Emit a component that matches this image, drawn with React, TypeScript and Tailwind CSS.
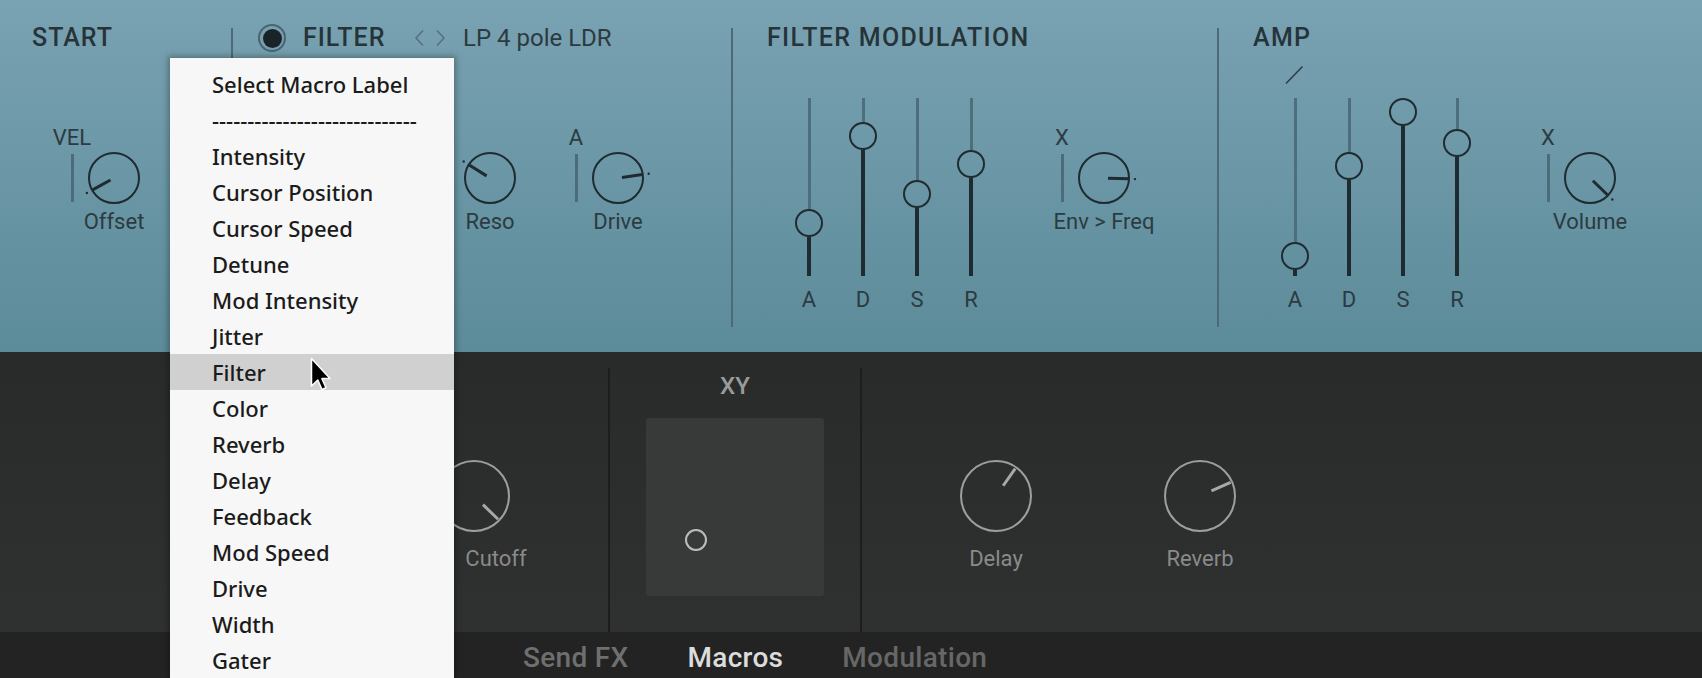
import React from "react";

function pt(cx: number, cy: number, d: number, a: number): [number, number] {
  const r = (a * Math.PI) / 180;
  return [cx + d * Math.cos(r), cy + d * Math.sin(r)];
}

function TealKnob({ angle }: { angle: number }) {
  const [x1, y1] = pt(26, 26, 4, angle);
  const [x2, y2] = pt(26, 26, 24.5, angle);
  const [dx, dy] = pt(26, 26, 31, angle);
  return (
    <svg width={52} height={52} viewBox="0 0 52 52" className="overflow-visible mt-[31px] shrink-0">
      <circle cx={26} cy={26} r={25} fill="none" stroke="#1f2b30" strokeWidth={2} />
      <line x1={x1} y1={y1} x2={x2} y2={y2} stroke="#1f2b30" strokeWidth={3} />
      <circle cx={dx} cy={dy} r={1.2} fill="#1f2b30" />
    </svg>
  );
}

function DarkKnobSvg({ angle }: { angle: number }) {
  const [x1, y1] = pt(36, 36, 12.5, angle);
  const [x2, y2] = pt(36, 36, 33.5, angle);
  return (
    <svg width={72} height={72} viewBox="0 0 72 72" className="shrink-0">
      <circle cx={36} cy={36} r={35} fill="none" stroke="#9e9e9e" strokeWidth={2} />
      <line x1={x1} y1={y1} x2={x2} y2={y2} stroke="#a8a8a8" strokeWidth={3} />
    </svg>
  );
}

function ModKnob({ label, name, angle }: { label: string; name: string; angle: number }) {
  return (
    <div className="flex gap-[4px]">
      <div className="w-[24px] flex flex-col items-center">
        <div className="pt-[2px] h-[30px] leading-[30px] text-[22px] whitespace-nowrap text-[#2b3b41]">{label}</div>
        <div className="mt-[3px] w-[3px] h-[48px] bg-[#4b6c78]" />
      </div>
      <div className="w-[52px] flex flex-col items-center">
        <TealKnob angle={angle} />
        <div className="mt-[3px] h-[30px] leading-[30px] text-[22px] whitespace-nowrap text-[#2b3b41]">{name}</div>
      </div>
    </div>
  );
}

function Slider({ label, handle, slash }: { label: string; handle: number; slash?: boolean }) {
  const upper = handle - 14 - 98;
  const lower = 276 - (handle + 14);
  return (
    <div className="w-[30px] flex flex-col items-center">
      <div className="h-[40px] w-full flex justify-center">
        {slash && (
          <svg width={20} height={20} viewBox="0 0 20 20" className="mt-[7px]">
            <line x1={1} y1={18.5} x2={17.5} y2={1.5} stroke="#2b3b41" strokeWidth={1.5} />
          </svg>
        )}
      </div>
      <div className="w-[3px] bg-[#4d6f7b]" style={{ height: upper }} />
      <div className="w-[28px] h-[28px] rounded-full border-2 border-[#1f2b30] shrink-0" />
      <div className="w-[4px] bg-[#1f2b30]" style={{ height: lower }} />
      <div className="mt-[9px] h-[30px] leading-[30px] text-[22px] text-[#2b3b41]">{label}</div>
    </div>
  );
}

function TopDivider() {
  return <div className="w-[2px] h-[299px] mt-[28px] bg-[#4c6b76] shrink-0" />;
}

function DarkDivider() {
  return <div className="w-[2px] h-[264px] mt-[16px] bg-[#1d1d1d] shrink-0" />;
}

const menuItems = [
  "Select Macro Label",
  "-----------------------------",
  "Intensity",
  "Cursor Position",
  "Cursor Speed",
  "Detune",
  "Mod Intensity",
  "Jitter",
  "Filter",
  "Color",
  "Reverb",
  "Delay",
  "Feedback",
  "Mod Speed",
  "Drive",
  "Width",
  "Gater",
];

export default function App() {
  return (
    <div className="relative w-[1702px] h-[678px] overflow-hidden [font-family:Roboto,'Liberation_Sans',sans-serif] bg-[#232323]">
      {/* TOP PANEL */}
      <div className="flex h-[352px] bg-linear-to-b from-[#79a2b2] to-[#5c8b9a] text-[#26343a]">
        {/* START */}
        <div className="w-[231px] shrink-0 pt-[23px] flex flex-col">
          <div className="pl-[32px] h-[30px] leading-[30px] text-[25px] font-medium tracking-[1px]">START</div>
          <div className="ml-[60px] mt-[68px]">
            <ModKnob label="VEL" name="Offset" angle={151} />
          </div>
        </div>
        <TopDivider />
        {/* FILTER */}
        <div className="w-[498px] shrink-0 pt-[23px] flex flex-col">
          <div className="h-[30px] flex items-center pl-[25px]">
            <div className="w-[28px] h-[28px] rounded-full border-2 border-[#48666f] flex items-center justify-center shrink-0">
              <div className="w-[19px] h-[19px] rounded-full bg-[#1a2327]" />
            </div>
            <span className="ml-[17px] w-[112px] text-[25px] font-medium leading-[30px] tracking-[1px]">FILTER</span>
            <svg width={30} height={16} viewBox="0 0 30 16" className="shrink-0">
              <polyline points="8,0.5 1,8 8,15.5" fill="none" stroke="#52717c" strokeWidth={1.5} />
              <polyline points="22,0.5 29,8 22,15.5" fill="none" stroke="#52717c" strokeWidth={1.5} />
            </svg>
            <span className="ml-[18px] text-[24px] leading-[30px] text-[#2b3a40]">LP 4 pole LDR</span>
          </div>
          <div className="flex mt-[68px] ml-[75px] gap-[48px]">
            <ModKnob label="" name="" angle={120} />
            <ModKnob label="" name="Reso" angle={212} />
            <ModKnob label="A" name="Drive" angle={-8} />
          </div>
        </div>
        <TopDivider />
        {/* FILTER MODULATION */}
        <div className="w-[484px] shrink-0 pt-[23px] flex flex-col">
          <div className="pl-[34px] h-[30px] leading-[30px] text-[25px] font-medium tracking-[1.3px] whitespace-nowrap">
            FILTER MODULATION
          </div>
          <div className="flex mt-[5px] ml-[61px]">
            <div className="flex gap-[24px]">
              <Slider label="A" handle={223} />
              <Slider label="D" handle={136} />
              <Slider label="S" handle={194} />
              <Slider label="R" handle={164} />
            </div>
            <div className="ml-[64px] mt-[63px]">
              <ModKnob label="X" name="Env > Freq" angle={2} />
            </div>
          </div>
        </div>
        <TopDivider />
        {/* AMP */}
        <div className="flex-1 pt-[23px] flex flex-col">
          <div className="pl-[34px] h-[30px] leading-[30px] text-[25px] font-medium tracking-[1.3px]">AMP</div>
          <div className="flex mt-[5px] ml-[61px]">
            <div className="flex gap-[24px]">
              <Slider label="A" handle={256} slash />
              <Slider label="D" handle={166} />
              <Slider label="S" handle={112} />
              <Slider label="R" handle={143} />
            </div>
            <div className="ml-[64px] mt-[63px]">
              <ModKnob label="X" name="Volume" angle={44} />
            </div>
          </div>
        </div>
      </div>

      {/* DARK PANEL */}
      <div className="flex h-[280px] bg-linear-to-b from-[#292a2a] to-[#2f3030]">
        <div className="w-[608px] shrink-0 flex">
          <div className="ml-[438px] mt-[108px] w-[72px] flex flex-col items-center">
            <DarkKnobSvg angle={44} />
            <div className="ml-[44px] mt-[12px] h-[30px] leading-[30px] text-[22px] text-[#8a8a8a] whitespace-nowrap">Cutoff</div>
          </div>
        </div>
        <DarkDivider />
        <div className="w-[250px] shrink-0 flex flex-col items-center">
          <div className="mt-[19px] h-[30px] leading-[30px] text-[24px] font-medium text-[#9a9a9a]">XY</div>
          <div className="mt-[17px] w-[178px] h-[178px] rounded-[3px] bg-[#383939] pl-[39px] pt-[111px]">
            <div className="w-[22px] h-[22px] rounded-full border-2 border-[#bdbdbd]" />
          </div>
        </div>
        <DarkDivider />
        <div className="flex-1 flex">
          <div className="ml-[98px] mt-[108px] w-[72px] flex flex-col items-center">
            <DarkKnobSvg angle={-55} />
            <div className="mt-[12px] h-[30px] leading-[30px] text-[22px] text-[#8a8a8a]">Delay</div>
          </div>
          <div className="ml-[132px] mt-[108px] w-[72px] flex flex-col items-center">
            <DarkKnobSvg angle={-24} />
            <div className="mt-[12px] h-[30px] leading-[30px] text-[22px] text-[#8a8a8a]">Reverb</div>
          </div>
        </div>
      </div>

      {/* FOOTER */}
      <div className="h-[46px] bg-[#232323] flex items-center pt-[5px] pl-[523px] gap-[59px] text-[28px] font-medium tracking-[0.3px]">
        <span className="text-[#6f6f6f]">Send FX</span>
        <span className="text-[#dcdcdc]">Macros</span>
        <span className="text-[#676767]">Modulation</span>
      </div>

      {/* MENU OVERLAY */}
      <div className="absolute left-[170px] top-[58px] w-[284px] h-[620px] bg-[#f7f7f7] overflow-hidden pt-[8px] shadow-[0_0_6px_2px_rgba(0,0,0,0.3)] [font-family:'Noto_Sans','Open_Sans',sans-serif]">
        {menuItems.map((item, i) => (
          <div
            key={i}
            className={
              i === 8
                ? "h-[36px] leading-[36px] pl-[42px] text-[22px] font-medium text-[#1b1b1b] whitespace-nowrap bg-[#d0d0d0]"
                : "h-[36px] leading-[36px] pl-[42px] text-[22px] font-medium text-[#1b1b1b] whitespace-nowrap"
            }
          >
            {item}
          </div>
        ))}
      </div>

      {/* CURSOR */}
      <svg
        className="absolute left-[310px] top-[357px]"
        width={24}
        height={36}
        viewBox="0 0 24 36"
      >
        <path
          d="M1.5 1.5 L1.5 29 L7.8 23 L12 32.5 L16 30.8 L11.9 21.6 L20 21.6 Z"
          fill="#000"
          stroke="#fff"
          strokeWidth={1.5}
          strokeLinejoin="round"
        />
      </svg>
    </div>
  );
}
